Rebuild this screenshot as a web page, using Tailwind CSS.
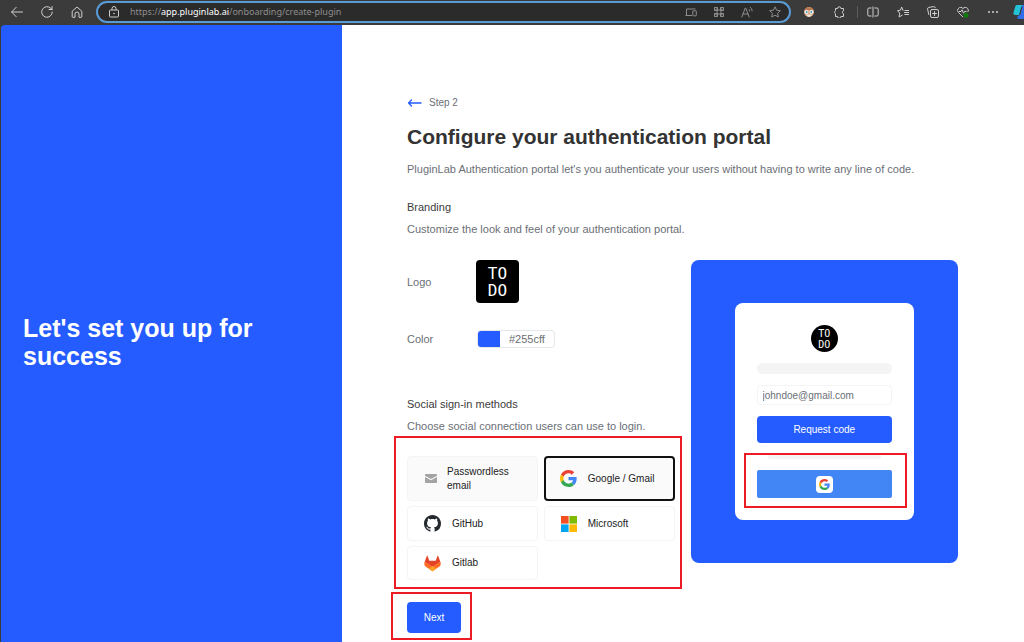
<!DOCTYPE html>
<html lang="en">
<head>
    <meta charset="UTF-8">
    <meta name="viewport" content="width=device-width, initial-scale=1.0">
    <title>PluginLab - Create plugin</title>
    <script src="https://cdn.jsdelivr.net/npm/@tailwindcss/browser@4"></script>
</head>
<body class="min-h-screen flex flex-col bg-[#3b3b3b] font-['Liberation_Sans',Arial,sans-serif] text-xs text-[#6b6f76]">
    <!-- shared icons -->
    <svg class="hidden">
        <symbol id="google" viewBox="0 0 48 48">
            <path fill="#EA4335" d="M24 9.5c3.54 0 6.71 1.22 9.21 3.6l6.85-6.85C35.9 2.38 30.47 0 24 0 14.62 0 6.51 5.38 2.56 13.22l7.98 6.19C12.43 13.72 17.74 9.5 24 9.5z"/>
            <path fill="#4285F4" d="M46.98 24.55c0-1.57-.15-3.09-.38-4.55H24v9.02h12.94c-.58 2.96-2.26 5.48-4.78 7.18l7.73 6c4.51-4.18 7.09-10.36 7.09-17.65z"/>
            <path fill="#FBBC05" d="M10.53 28.59c-.48-1.45-.76-2.99-.76-4.59s.27-3.14.76-4.59l-7.98-6.19C.92 16.46 0 20.12 0 24c0 3.88.92 7.54 2.56 10.78l7.97-6.19z"/>
            <path fill="#34A853" d="M24 48c6.48 0 11.93-2.13 15.89-5.81l-7.73-6c-2.15 1.45-4.92 2.3-8.16 2.3-6.26 0-11.57-4.22-13.47-9.91l-7.98 6.19C6.51 42.62 14.62 48 24 48z"/>
        </symbol>
    </svg>

    <!-- browser toolbar -->
    <header class="h-6 shrink-0 flex items-center overflow-hidden pl-[2px] text-[#cfcfcf]">
        <button class="w-[30px] flex justify-center" aria-label="Back">
            <svg class="size-3" viewBox="0 0 12 12" fill="none" stroke="currentColor" stroke-linecap="round" stroke-linejoin="round"><path d="M11.5 6H.7M5.2 1.3.6 6l4.6 4.7"/></svg>
        </button>
        <button class="w-[30px] flex justify-center" aria-label="Reload">
            <svg class="size-3" viewBox="0 0 12 12" fill="none" stroke="currentColor" stroke-linecap="round" stroke-linejoin="round"><path d="M11.3 6A5.3 5.3 0 1 1 9.8 2.3L11 3.5M11 .5v3H8"/></svg>
        </button>
        <button class="w-[30px] flex justify-center" aria-label="Home">
            <svg class="size-3" viewBox="0 0 12 12" fill="none" stroke="currentColor" stroke-linejoin="round"><path d="M1.2 5.2 6 1l4.8 4.2v5.5a.6.6 0 0 1-.6.6H8V8a2 2 0 0 0-4 0v3.300H1.800a.6.6 0 0 1-.6-.6z"/></svg>
        </button>
        <div class="ml-1 flex-1 h-[22px] rounded-full border-2 border-[#5a9bd5] bg-[#2b2b2b] flex items-center pl-[10px] text-[#8d8d8d]">
            <svg class="size-3 text-[#cfcfcf]" viewBox="0 0 12 12" fill="none" stroke="currentColor"><rect x="1.500" y="4" width="9" height="7" rx="1"/><path d="M4 4V2.500a2 2 0 0 1 4 0V4"/><circle cx="6" cy="7.500" r=".8" fill="currentColor" stroke="none"/></svg>
            <div role="textbox" aria-label="Address" class="flex-1 ml-[10px] whitespace-nowrap font-['Noto_Sans',sans-serif] text-[9px]">https://<span class="text-white">app.pluginlab.ai</span>/onboarding/create-plugin</div>
            <button class="w-7 flex justify-center" aria-label="Send to device">
                <svg class="size-3" viewBox="0 0 12 12" fill="none" stroke="currentColor"><path d="M7 9.500H.5M1.500 9.500V3h9"/><rect x="7.800" y="4.800" width="3.500" height="5" rx=".5"/></svg>
            </button>
            <button class="w-7 flex justify-center" aria-label="App">
                <svg class="size-3" viewBox="0 0 12 12" fill="none" stroke="currentColor"><path d="M4 1v10M8 1v10M1 4h10M1 8h10"/><path d="M1.500 1.500h3v3h-3zM7.500 1.500h3v3h-3zM1.500 7.500h3v3h-3zM7.500 7.500h3v3h-3z"/></svg>
            </button>
            <button class="w-7 flex justify-center" aria-label="Read aloud">
                <svg class="size-3" viewBox="0 0 12 12" fill="none" stroke="currentColor" stroke-linecap="round"><path d="M.8 11 4.300 2h.4l3.500 9M2 8h5M8 3.300a2 2 0 0 1 .8 1.700M9.200 1.200A4 4 0 0 1 11.200 4.800"/></svg>
            </button>
            <button class="w-7 flex justify-center" aria-label="Add to favorites">
                <svg class="size-3" viewBox="0 0 12 12" fill="none" stroke="currentColor" stroke-linejoin="round"><path d="m6 .8 1.600 3.400 3.700.5-2.700 2.600.7 3.700L6 9.200 2.700 11l.7-3.700L.7 4.700l3.700-.5z"/></svg>
            </button>
        </div>
        <button class="w-[30px] ml-[3px] flex justify-center" aria-label="Extension">
            <svg class="size-3" viewBox="0 0 12 12"><circle cx="6" cy="6" r="5" fill="#d9a077"/><path fill="#b9774e" d="M1.500 4a5 5 0 0 1 9 0z"/><path fill="#efe7dc" d="M3 8.500h6A3.500 3.500 0 0 1 6 11a3.500 3.500 0 0 1-3-2.500z"/><circle cx="3.500" cy="6" r="2" fill="#e8f4f8"/><circle cx="8.500" cy="6" r="2" fill="#e8f4f8"/><circle cx="3.700" cy="6" r=".9" fill="#4a8fa8"/><circle cx="8.300" cy="6" r=".9" fill="#4a8fa8"/></svg>
        </button>
        <button class="w-[30px] flex justify-center" aria-label="Extensions">
            <svg class="size-3" viewBox="0 0 12 12" fill="none" stroke="currentColor" stroke-linejoin="round"><path d="M2.500 2.500h2a1.700 1.700 0 0 1 3.400 0h2.600v2.300a1.500 1.500 0 0 0 0 2.900v2.800H7.900a1.700 1.700 0 0 1-3.400 0h-2V7.700a1.600 1.600 0 0 1 0-2.900z"/></svg>
        </button>
        <span class="w-px h-3 ml-[3px] bg-[#5c5c5c]"></span>
        <button class="w-[30px] flex justify-center" aria-label="Split screen">
            <svg class="size-3" viewBox="0 0 12 12" fill="none" stroke="currentColor"><path d="M4.500 2H2a1.200 1.200 0 0 0-1.200 1.200v5.600A1.200 1.200 0 0 0 2 10h2.500M7.500 2H10a1.200 1.200 0 0 1 1.200 1.200v5.600A1.200 1.200 0 0 1 10 10H7.500M6 .5v11"/></svg>
        </button>
        <button class="w-[30px] flex justify-center" aria-label="Favorites">
            <svg class="size-3" viewBox="0 0 12 12" fill="none" stroke="currentColor" stroke-linejoin="round"><path d="M6.500 4.200h-.7L4.700 1 3.400 4.200.5 4.700l2.200 2.400L2.100 11l3.400-2M7.500 4.500H12M7 6.500h5M7.500 8.500H12"/></svg>
        </button>
        <button class="w-[30px] flex justify-center" aria-label="Collections">
            <svg class="size-3" viewBox="0 0 12 12" fill="none" stroke="currentColor" stroke-linecap="round"><rect x="3.500" y="3.500" width="8" height="8" rx="1.500"/><path d="M1.800 8.500 .6 3.200a1.500 1.500 0 0 1 1.100-1.800L6.500.6a1.500 1.500 0 0 1 1.800 1.100M7.500 5.500v4M5.500 7.500h4"/></svg>
        </button>
        <button class="w-[30px] flex justify-center" aria-label="Browser essentials">
            <svg class="size-3" viewBox="0 0 12 12" fill="none" stroke="currentColor" stroke-linejoin="round"><path d="M6 11 1.500 6.500a2.900 2.900 0 0 1 0-4.200 2.900 2.900 0 0 1 4.500.3 2.900 2.900 0 0 1 4.500-.3 2.900 2.900 0 0 1 .3 3.700M2 5.500h2l1-1.700 1.500 3.400 1-1.700h2"/><circle cx="9" cy="9.300" r="2.500" fill="#107c10" stroke="none"/></svg>
        </button>
        <button class="w-[30px] flex justify-center" aria-label="Settings and more">
            <svg class="size-3" viewBox="0 0 12 12" fill="currentColor"><circle cx="2" cy="6" r="1"/><circle cx="6" cy="6" r="1"/><circle cx="10" cy="6" r="1"/></svg>
        </button>
        <button class="w-4 pl-[5px] overflow-hidden" aria-label="Copilot">
            <svg class="w-5 h-4" viewBox="0 0 20 16"><path fill="#22c3d6" d="M4 1h5L6.500 11H2.500C.8 11 0 10 .5 8.500L2.300 2.600C2.600 1.600 3 1 4 1z"/><path fill="#2f6fea" d="M9 1h5c1 0 1.500 1 1.200 2l-3 10c-.4 1.200-1 2-2.200 2H6c-1.200 0-2-1-1.700-2.500L6.500 11z"/><path fill="#3b3b3b" d="M8.300 3h1.200L7.200 11H6z"/></svg>
        </button>
    </header>

    <div class="flex-1 flex pl-px pt-px">
        <aside class="w-1/3 shrink-0 bg-[#255cff] rounded-tl flex items-center px-[22px] pt-4">
            <h1 class="text-[25px] leading-7 font-bold text-white">Let's set you up for success</h1>
        </aside>

        <main class="flex-1 bg-white pl-[65px] pr-[66px] pt-[70px] pb-2">
            <a href="#" class="flex items-center gap-[7px] h-4 text-[10px]">
                <svg class="w-[15px] h-2" viewBox="0 0 15 8" fill="none" stroke="#255cff" stroke-width="1.3" stroke-linecap="round" stroke-linejoin="round"><path d="M14 4H1.500M4.500 1l-3 3 3 3"/></svg>
                Step 2
            </a>
            <h2 class="mt-[10px] text-[21px] leading-8 font-bold text-[#333333]">Configure your authentication portal</h2>
            <p class="mt-2 text-[11px] leading-4">PluginLab Authentication portal let's you authenticate your users without having to write any line of code.</p>
            <h3 class="mt-[22px] text-[11px] leading-4 text-[#3c3c3c]">Branding</h3>
            <p class="mt-[6px] text-[11px] leading-4">Customize the look and feel of your authentication portal.</p>

            <div class="mt-[23px] grid grid-cols-2 gap-4 items-start">
                <section class="text-[11px] leading-4">
                    <div class="flex items-center">
                        <span class="w-[69px]">Logo</span>
                        <div class="size-[43px] rounded bg-black text-white flex flex-col items-center justify-center font-['DejaVu_Sans_Mono',monospace] text-[16px] leading-[17px]"><span>TO</span><span>DO</span></div>
                    </div>
                    <div class="mt-[27px] flex items-center">
                        <label for="color" class="w-[70px]">Color</label>
                        <div class="flex w-[78px] h-[18px] rounded border border-gray-200 overflow-hidden">
                            <span class="w-[22px] bg-[#255cff]"></span>
                            <input id="color" type="text" value="#255cff" class="flex-1 min-w-0 pl-[9px] outline-none">
                        </div>
                    </div>

                    <h3 class="mt-12 text-[#3c3c3c]">Social sign-in methods</h3>
                    <p class="mt-[6px]">Choose social connection users can use to login.</p>

                    <div class="relative mt-[22px] grid grid-cols-2 gap-x-[6px] gap-y-[5px] text-[10px] leading-[14px] text-[#222222]">
                        <button class="h-[45px] flex items-center pl-4 rounded-sm border border-gray-100 bg-[#fafafa] text-left">
                            <svg class="w-3 h-[9px] mx-px" viewBox="0 0 12 9" fill="#a3a3a3"><path d="M1 0h10c.6 0 1 .4 1 1v.7L6 5 0 1.700V1c0-.6.4-1 1-1z"/><path d="m0 3 6 3.300L12 3v5c0 .6-.4 1-1 1H1c-.6 0-1-.4-1-1z"/></svg>
                            <span class="ml-[9px] w-16">Passwordless email</span>
                        </button>
                        <button class="h-[45px] flex items-center pl-[14px] rounded border-2 border-[#111111] bg-[#fafafa]">
                            <svg class="size-[17px]"><use href="#google"/></svg>
                            <span class="ml-[11px]">Google / Gmail</span>
                        </button>
                        <button class="h-[35px] flex items-center pl-4 rounded-sm border border-gray-100">
                            <svg class="size-[17px]" viewBox="0 0 16 16" fill="#24292f"><path d="M8 0C3.580 0 0 3.580 0 8c0 3.540 2.290 6.530 5.470 7.590.4.070.55-.17.55-.38 0-.19-.01-.82-.01-1.490-2.010.37-2.530-.49-2.690-.94-.09-.23-.48-.94-.82-1.130-.28-.15-.68-.52-.01-.53.63-.01 1.080.58 1.230.82.72 1.210 1.870.87 2.330.66.07-.52.28-.87.51-1.070-1.780-.2-3.640-.89-3.640-3.950 0-.87.31-1.590.82-2.150-.08-.2-.36-1.020.08-2.120 0 0 .67-.21 2.200.82.64-.18 1.320-.27 2-.27s1.360.09 2 .27c1.530-1.040 2.200-.82 2.200-.82.44 1.100.16 1.920.08 2.120.51.56.82 1.270.82 2.150 0 3.070-1.870 3.750-3.650 3.950.29.25.54.73.54 1.480 0 1.070-.01 1.930-.01 2.200 0 .21.15.46.55.38A8.010 8.010 0 0 0 16 8c0-4.420-3.580-8-8-8z"/></svg>
                            <span class="ml-[11px]">GitHub</span>
                        </button>
                        <button class="h-[35px] flex items-center pl-4 rounded-sm border border-gray-100">
                            <svg class="size-4" viewBox="0 0 16 16"><path fill="#f25022" d="M0 0h7.600v7.600H0z"/><path fill="#7fba00" d="M8.400 0H16v7.600H8.400z"/><path fill="#00a4ef" d="M0 8.400h7.600V16H0z"/><path fill="#ffb900" d="M8.400 8.400H16V16H8.400z"/></svg>
                            <span class="ml-[11px]">Microsoft</span>
                        </button>
                        <button class="h-[34px] flex items-center pl-4 rounded-sm border border-gray-100">
                            <svg class="size-[17px]" viewBox="0 0 24 24"><path fill="#e24329" d="M.8 10 4 1.300c.2-.5.900-.5 1.100 0L7.400 8h9.200l2.300-6.700c.2-.5.900-.5 1.100 0L23.200 10 12 17z"/><path fill="#fc6d26" d="M.8 10c-1 2.600-.2 5 1.900 6.700L12 23l9.300-6.300c2.100-1.700 2.900-4.100 1.900-6.700-2.200.4-4.200 1.300-5.900 2.600L12 16.600l-5.300-4C5 11.300 3 10.400.8 10z"/><path fill="#fca326" d="m6.800 19.500 4.200 3.100c.6.500 1.400.5 2 0l4.200-3.100L12 15.600z"/></svg>
                            <span class="ml-[11px]">Gitlab</span>
                        </button>
                        <!-- highlight -->
                        <span class="absolute -top-5 -bottom-[9px] -left-[13px] -right-[7px] border-2 border-[#ed1c24] pointer-events-none"></span>
                    </div>

                    <div class="relative mt-[22px] w-fit">
                        <button class="w-[54px] h-[31px] rounded-sm bg-[#255cff] text-white text-[10px]">Next</button>
                        <!-- highlight -->
                        <span class="absolute -top-[10px] -bottom-[7px] -left-4 -right-[11px] border-2 border-[#ed1c24] pointer-events-none"></span>
                    </div>
                </section>

                <!-- portal preview -->
                <section class="rounded-lg bg-[#255cff] px-11 py-[43px]">
                    <div class="rounded-lg bg-white p-[22px] flex flex-col gap-[11px] text-[10px]">
                        <div class="size-[27px] self-center rounded-full bg-black text-white flex flex-col items-center justify-center font-['DejaVu_Sans_Mono',monospace] text-[10px] leading-[11px]"><span>TO</span><span>DO</span></div>
                        <div class="h-[11px] rounded-full bg-[#f4f4f4]"></div>
                        <input type="email" aria-label="Email" value="johndoe@gmail.com" class="h-5 w-full rounded-sm border border-gray-100 px-[5px] outline-none">
                        <button class="h-[27px] rounded-sm bg-[#255cff] text-white">Request code</button>
                        <div class="h-[5px] mx-[11px] rounded-full bg-[#f4f4f4]"></div>
                        <div class="relative">
                            <button class="w-full h-7 rounded-xs bg-[#4285f4] flex items-center justify-center" aria-label="Sign in with Google">
                                <span class="size-[17px] rounded-sm bg-white flex items-center justify-center"><svg class="size-[11px]"><use href="#google"/></svg></span>
                            </button>
                            <!-- highlight -->
                            <span class="absolute -top-[17px] -bottom-[10px] -left-[13px] -right-[15px] border-2 border-[#ed1c24] pointer-events-none"></span>
                        </div>
                    </div>
                </section>
            </div>
        </main>
    </div>
</body>
</html>
